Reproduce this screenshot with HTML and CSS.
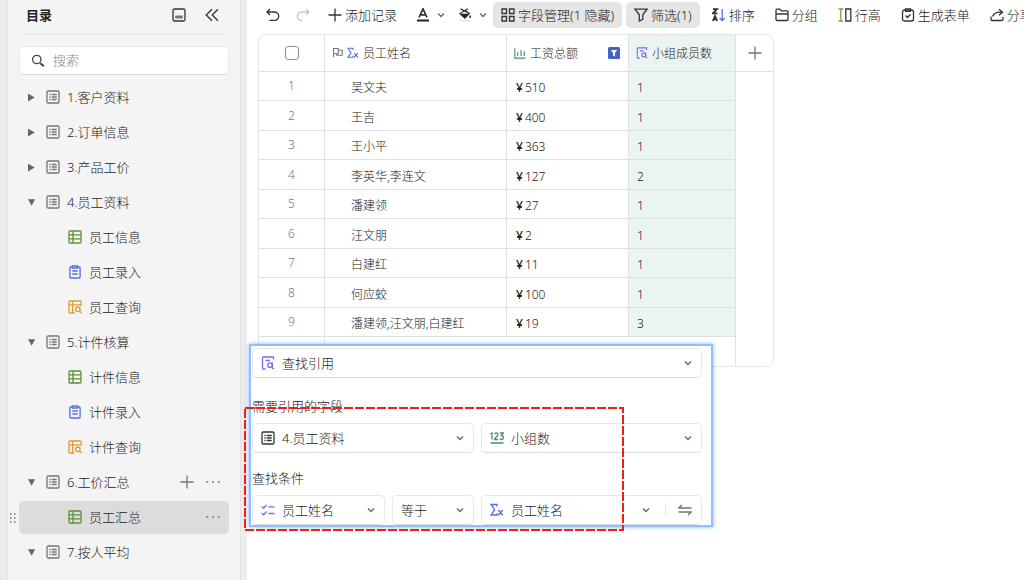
FILE: index.html
```html
<!DOCTYPE html>
<html lang="zh-CN">
<head>
    <meta charset="UTF-8">
    <meta name="viewport" content="width=device-width, initial-scale=1.0">
    <title>员工汇总</title>
    <link rel="stylesheet" href="styles.css">
</head>
<body>
    <!-- 公用图标 -->
    <svg class="sprite" aria-hidden="true">
        <symbol id="i-list" viewBox="0 0 14 14"><rect x="1" y="1" width="12" height="12" rx="1.2"/><path d="M3.4 4.5h1.2M3.4 7h1.2M3.4 9.5h1.2M5.7 4.5h5M5.7 7h5M5.7 9.5h5"/></symbol>
        <symbol id="i-table" viewBox="0 0 14 14"><rect x="1" y="1" width="12" height="12" rx="1"/><path d="M1 4.8h12M1 8.8h12M5 1v12"/></symbol>
        <symbol id="i-form" viewBox="0 0 14 14"><path d="M4 2H2.800c-.6 0-.9.3-.9.9v9.200c0 .6.3.9.9.9h8.400c.6 0 .9-.3.9-.9V2.900c0-.6-.3-.9-.9-.9H10"/><path d="M4.300 1h5.400v2H4.300zM4.300 6h5.400M4.300 9h5.400"/></symbol>
        <symbol id="i-query" viewBox="0 0 14 14"><path d="M6.500 13H1.800a.8.8 0 0 1-.8-.8V1.800c0-.5.4-.8.8-.8h10.400c.5 0 .8.3.8.8V6M1 4.8h12M4.600 1v12"/><circle cx="9.800" cy="9.300" r="2.300"/><path d="M11.500 11l2 2.300"/></symbol>
        <symbol id="i-lookup" viewBox="0 0 14 14"><path d="M4.500 13H2.500c-.6 0-1-.4-1-1V2c0-.6.4-1 1-1H12.500v2.500M4.500 4.500H9"/><circle cx="9" cy="9.200" r="2.300"/><path d="M11.300 6.500v5c0 .8.600 1.300 1.800 1.300"/></symbol>
        <symbol id="i-sigma" viewBox="0 0 14 14"><path d="M7 3.5V1.5H1.2L4.700 6.700 1.200 12H7v-1.800M8.200 7l4.600 5.200M12.800 7l-4.600 5.200"/></symbol>
        <symbol id="i-chevron" viewBox="0 0 8 8"><path d="M1 2.500l3 3 3-3"/></symbol>
        <symbol id="i-plus" viewBox="0 0 14 14"><path d="M7 .5v13M.5 7h13"/></symbol>
        <symbol id="i-dots" viewBox="0 0 14 14"><path d="M.3 7h1.900M6 7h1.900M11.700 7h1.900"/></symbol>
    </svg>

    <div class="app">
        <aside class="sidebar">
            <div class="side-header">
                <h1>目录</h1>
                <button class="icon-btn" aria-label="面板"><svg class="icon dark" viewBox="0 0 14 14"><rect x="1" y="1" width="12" height="12" rx="1.5"/><path class="solid" d="M3.200 7.500h7.600v3H3.200z"/></svg></button>
                <button class="icon-btn" aria-label="收起"><svg class="icon dark" viewBox="0 0 14 14"><path d="M7 1.200L1.200 7 7 12.800M13 1.200L7.200 7l5.800 5.800"/></svg></button>
            </div>
            <label class="search">
                <svg class="icon navy" viewBox="0 0 14 14"><circle cx="5.800" cy="5.500" r="4.200"/><path class="thick" d="M9.400 9.200l3.400 3"/></svg>
                <input type="text" placeholder="搜索" aria-label="搜索">
            </label>
            <nav class="tree">
                <div class="node"><span class="caret"></span><svg class="icon gray"><use href="#i-list"/></svg><a href="#">1.客户资料</a></div>
                <div class="node"><span class="caret"></span><svg class="icon gray"><use href="#i-list"/></svg><a href="#">2.订单信息</a></div>
                <div class="node"><span class="caret"></span><svg class="icon gray"><use href="#i-list"/></svg><a href="#">3.产品工价</a></div>
                <div class="node"><span class="caret open"></span><svg class="icon gray"><use href="#i-list"/></svg><a href="#">4.员工资料</a></div>
                <div class="node child"><svg class="icon green"><use href="#i-table"/></svg><a href="#">员工信息</a></div>
                <div class="node child"><svg class="icon blue"><use href="#i-form"/></svg><a href="#">员工录入</a></div>
                <div class="node child"><svg class="icon orange"><use href="#i-query"/></svg><a href="#">员工查询</a></div>
                <div class="node"><span class="caret open"></span><svg class="icon gray"><use href="#i-list"/></svg><a href="#">5.计件核算</a></div>
                <div class="node child"><svg class="icon green"><use href="#i-table"/></svg><a href="#">计件信息</a></div>
                <div class="node child"><svg class="icon blue"><use href="#i-form"/></svg><a href="#">计件录入</a></div>
                <div class="node child"><svg class="icon orange"><use href="#i-query"/></svg><a href="#">计件查询</a></div>
                <div class="node"><span class="caret open"></span><svg class="icon gray"><use href="#i-list"/></svg><a href="#">6.工价汇总</a>
                    <button class="icon-btn" aria-label="添加"><svg class="icon gray"><use href="#i-plus"/></svg></button>
                    <button class="icon-btn" aria-label="更多"><svg class="icon gray"><use href="#i-dots"/></svg></button>
                </div>
                <div class="node child active">
                    <svg class="grip" viewBox="0 0 6 10"><path d="M0 1h1.500M4 1h1.500M0 5h1.500M4 5h1.500M0 9h1.500M4 9h1.500"/></svg>
                    <svg class="icon green"><use href="#i-table"/></svg><a href="#">员工汇总</a>
                    <button class="icon-btn" aria-label="更多"><svg class="icon gray"><use href="#i-dots"/></svg></button>
                </div>
                <div class="node"><span class="caret open"></span><svg class="icon gray"><use href="#i-list"/></svg><a href="#">7.按人平均</a></div>
            </nav>
        </aside>

        <main>
            <div class="toolbar">
                <button class="tool small" aria-label="撤销"><svg class="icon dark" viewBox="0 0 14 14"><path d="M4 1L1 4l3 3M1 4h7.500a4.200 4.200 0 0 1 0 8.400H3.500"/></svg></button>
                <button class="tool small" aria-label="重做"><svg class="icon light" viewBox="0 0 14 14"><path d="M10 1l3 3-3 3M13 4H5.500a4.200 4.200 0 0 0 0 8.400H6"/></svg></button>
                <button class="tool"><svg class="icon dark"><use href="#i-plus"/></svg>添加记录</button>
                <button class="tool drop" aria-label="文字颜色"><svg class="icon dark" viewBox="0 0 14 14"><path class="bold" d="M3 9.500L7 .8l4 8.700M4.500 6.800h5"/><path class="fill-black" d="M1 11.500h12v2H1z"/></svg><svg class="chev"><use href="#i-chevron"/></svg></button>
                <button class="tool drop" aria-label="填充颜色"><svg class="icon dark" viewBox="0 0 14 14"><path d="M2.500 .8l8 4.200M10 .8L2 5.500 6.800 10l4.500-4.500L6.500 2"/><path class="fill-black" d="M2.500 5.800h8.500L6.800 10zM12.200 7c1.300 1.800 1.300 3 0 3s-1.300-1.200 0-3z"/><path class="fill-pale" d="M1 11.800h12v1.700H1z"/></svg><svg class="chev"><use href="#i-chevron"/></svg></button>
                <button class="tool on"><svg class="icon dark" viewBox="0 0 14 14"><path d="M1 1h4.500v4.500H1zM8.500 1H13v4.500H8.500zM1 8.500h4.500V13H1zM8.500 8.500H13V13H8.500z"/></svg>字段管理(1 隐藏)</button>
                <button class="tool on"><svg class="icon dark" viewBox="0 0 14 14"><path d="M1 1.200h12L8.800 6.800v4.500L5.300 13V6.800z"/></svg>筛选(1)</button>
                <button class="tool"><svg class="icon dark" viewBox="0 0 14 14"><path class="bold" d="M1 1.200h4L1 5.300h4.500M.8 13L3 7.800 5.300 13M1.500 11.300h3.200"/><path class="s-blue" d="M10.200 1v11.500M7.500 10l2.700 2.600L12.700 10"/></svg>排序</button>
                <button class="tool"><svg class="icon dark" viewBox="0 0 14 14"><path d="M1 11.500V2.200C1 1.500 1.400 1.200 2 1.200h3l1.500 1.600H12c.6 0 1 .3 1 1v7.700c0 .6-.4 1-1 1H2c-.6 0-1-.4-1-1zM1 6h12"/></svg>分组</button>
                <button class="tool"><svg class="icon dark" viewBox="0 0 14 14"><path class="s-green" d="M.5 1h4.500M.5 13h4.500M2.800 1v12"/><path d="M7.800 1h5v12h-5z"/></svg>行高</button>
                <button class="tool"><svg class="icon dark" viewBox="0 0 14 14"><rect x="1.500" y="2" width="11" height="11" rx="2"/><path d="M4.500 .8h5v2.500h-5zM4.500 7.500l2 2 3-3.200"/></svg>生成表单</button>
                <button class="tool"><svg class="icon dark" viewBox="0 0 14 14"><path d="M9 1.200L12.500 4.200 9 7.200M12.500 4.200H9.500C6 4.200 4 5.500 2.500 8.500M1 8.500v2.800c0 .8.500 1.200 1.200 1.200h9.600c.7 0 1.200-.4 1.200-1.200V9"/></svg>分享</button>
            </div>

            <div class="grid-wrap">
                <table class="grid">
                    <colgroup><col class="c-num"><col class="c-name"><col class="c-sum"><col class="c-count"><col class="c-add"></colgroup>
                    <thead>
                        <tr>
                            <th><input type="checkbox" aria-label="全选"></th>
                            <th><div class="head"><svg class="icon xs gray" viewBox="0 0 14 14"><path d="M2 13V2h6v6.500H2M8 4h5v6.500H6V8.500"/></svg><svg class="icon sm blue"><use href="#i-sigma"/></svg>员工姓名</div></th>
                            <th><div class="head"><svg class="icon sm sea" viewBox="0 0 14 14"><path d="M1 1.500V13h12.500M4.300 6v4.500M8.200 3.500v7M12 5v5.500"/></svg>工资总额<svg class="filter-mark" viewBox="0 0 12 12"><rect width="12" height="12" rx="1.5"/><path d="M2.800 3h6.400L7 6v3.500L5 8.500V6z"/></svg></div></th>
                            <th class="tint"><div class="head"><svg class="icon sm violet"><use href="#i-lookup"/></svg>小组成员数</div></th>
                            <th><button class="icon-btn" aria-label="添加字段"><svg class="icon gray"><use href="#i-plus"/></svg></button></th>
                        </tr>
                    </thead>
                    <tbody>
                        <tr><td>1</td><td>吴文夫</td><td><b>¥</b>510</td><td class="tint">1</td><td></td></tr>
                        <tr><td>2</td><td>王吉</td><td><b>¥</b>400</td><td class="tint">1</td><td></td></tr>
                        <tr><td>3</td><td>王小平</td><td><b>¥</b>363</td><td class="tint">1</td><td></td></tr>
                        <tr><td>4</td><td>李英华,李连文</td><td><b>¥</b>127</td><td class="tint">2</td><td></td></tr>
                        <tr><td>5</td><td>潘建领</td><td><b>¥</b>27</td><td class="tint">1</td><td></td></tr>
                        <tr><td>6</td><td>汪文朋</td><td><b>¥</b>2</td><td class="tint">1</td><td></td></tr>
                        <tr><td>7</td><td>白建红</td><td><b>¥</b>11</td><td class="tint">1</td><td></td></tr>
                        <tr><td>8</td><td>何应蛟</td><td><b>¥</b>100</td><td class="tint">1</td><td></td></tr>
                        <tr><td>9</td><td>潘建领,汪文朋,白建红</td><td><b>¥</b>19</td><td class="tint">3</td><td></td></tr>
                        <tr class="blank"><td></td><td colspan="3"></td><td></td></tr>
                    </tbody>
                </table>
            </div>

            <section class="lookup">
                <div class="field">
                    <svg class="icon violet"><use href="#i-lookup"/></svg>
                    <select aria-label="字段类型"><option>查找引用</option></select>
                    <svg class="chev"><use href="#i-chevron"/></svg>
                </div>
                <h2>需要引用的字段</h2>
                <div class="row">
                    <div class="field">
                        <svg class="icon dark"><use href="#i-list"/></svg>
                        <select aria-label="数据表"><option>4.员工资料</option></select>
                        <svg class="chev"><use href="#i-chevron"/></svg>
                    </div>
                    <div class="field">
                        <svg class="icon sea" viewBox="0 0 14 14"><path d="M.5 3l1.500-1v6.500M4.500 3.200C4.800 1.500 8 1.500 8 3.500c0 1.500-3.500 3.500-3.500 5H8M10 2h3.200l-1.800 2.500c2.600 0 2.600 4 0 4-.8 0-1.200-.3-1.500-.9M.5 12h13"/></svg>
                        <select aria-label="引用字段"><option>小组数</option></select>
                        <svg class="chev"><use href="#i-chevron"/></svg>
                    </div>
                </div>
                <h2>查找条件</h2>
                <div class="row">
                    <div class="pair">
                        <div class="field">
                            <svg class="icon violet" viewBox="0 0 14 14"><path d="M.8 3.500l1.800 1.700L5.500 2M.8 10l1.800 1.700L5.500 8.500M7.500 3.800h6M7.500 10.500h6"/></svg>
                            <select aria-label="条件字段"><option>员工姓名</option></select>
                            <svg class="chev"><use href="#i-chevron"/></svg>
                        </div>
                        <div class="field">
                            <select aria-label="条件"><option>等于</option></select>
                            <svg class="chev"><use href="#i-chevron"/></svg>
                        </div>
                    </div>
                    <div class="field">
                        <svg class="icon blue"><use href="#i-sigma"/></svg>
                        <select aria-label="当前表字段"><option>员工姓名</option></select>
                        <svg class="chev"><use href="#i-chevron"/></svg>
                        <button class="swap" aria-label="切换"><svg class="icon gray" viewBox="0 0 14 14"><path d="M13.500 5H.8L4 2M.5 9h12.700L10 12"/></svg></button>
                    </div>
                </div>
            </section>

            <svg class="mark" aria-hidden="true"><rect x="1" y="1" width="378" height="122"/></svg>
        </main>
    </div>
</body>
</html>
```

FILE: styles.css
```css
* {
    box-sizing: border-box;
}
body {
    margin: 0;
    font-family: "Noto Sans", "Noto Sans CJK SC", sans-serif;
    font-size: 13px;
    font-weight: 300;
    color: #222;
    background: #ececec;
}
button, input, select {
    font: inherit;
    color: inherit;
}
button {
    border: none;
    background: none;
    padding: 0;
    cursor: pointer;
}
a {
    color: inherit;
    text-decoration: none;
}
.sprite {
    display: none;
}
.app {
    display: flex;
    height: 100vh;
    overflow: hidden;
    padding-left: 7px;
}

/* icons */
.icon {
    width: 14px;
    height: 14px;
    flex: none;
    display: block;
    fill: none;
    stroke: currentColor;
    stroke-width: 1.3;
}
.icon.sm {
    width: 12px;
    height: 12px;
}
.icon.xs {
    width: 11px;
    height: 11px;
}
.icon .thick {
    stroke-width: 2.2;
}
.icon .bold {
    stroke-width: 1.7;
}
.icon .solid {
    fill: #777;
    stroke: none;
}
.icon .fill-black {
    fill: #222;
    stroke: none;
}
.icon .fill-pale {
    fill: #e8e8e8;
    stroke: none;
}
.s-blue { stroke: #4a72e0; }
.s-green { stroke: #6aa84f; }
.dark { color: #333; }
.gray { color: #747474; }
.light { color: #c8c8c8; }
.navy { color: #3c4660; }
.green { color: #5c9138; }
.blue { color: #4f6fe0; }
.orange { color: #dd9d33; }
.violet { color: #7a68ee; }
.sea { color: #439466; }
.chev {
    width: 8px;
    height: 8px;
    flex: none;
    fill: none;
    stroke: #666;
    stroke-width: 1.3;
    pointer-events: none;
}

/* sidebar */
.sidebar {
    flex: none;
    width: 234px;
    padding: 0 11px;
    background: #f4f4f4;
    border-left: 1px solid #e2e2e2;
    border-right: 1px solid #e2e2e2;
}
.side-header {
    display: flex;
    align-items: center;
    gap: 19px;
    height: 35px;
    margin: 0 7px 11px;
    padding: 0 3px 4px 0;
    border-bottom: 2px solid #ebebeb;
}
.side-header h1 {
    flex: 1;
    margin: 0;
    font-size: 13px;
    font-weight: 700;
}
.search {
    display: flex;
    align-items: center;
    gap: 8px;
    height: 29px;
    padding: 0 11px;
    background: #fff;
    border: 1px solid #e8e8e8;
    border-bottom-color: #d8d8d8;
    border-radius: 5px;
}
.search input {
    flex: 1;
    min-width: 0;
    padding: 0 0 2px;
    border: none;
    outline: none;
    background: none;
}
.search input::placeholder {
    color: #888;
}
.tree {
    display: flex;
    flex-direction: column;
    gap: 2px;
    margin-top: 6px;
}
.node {
    display: flex;
    align-items: center;
    gap: 7px;
    height: 33px;
    padding: 0 9px;
    border-radius: 5px;
}
.node.child {
    padding-left: 49px;
}
.node.active {
    position: relative;
    background: #dcdcdc;
}
.node a {
    flex: 1;
    padding-bottom: 2px;
}
.node .icon {
    margin-bottom: 1px;
}
.node .icon-btn + .icon-btn {
    margin-left: 5px;
}
.caret {
    width: 11px;
    height: 8px;
    background: #666;
    clip-path: polygon(0 0, 60% 50%, 0 100%);
}
.caret.open {
    clip-path: polygon(0 10%, 65% 10%, 33% 90%);
}
.grip {
    position: absolute;
    left: -9px;
    width: 6px;
    height: 10px;
    stroke: #777;
    stroke-width: 1.5;
}

/* main area */
main {
    flex: 1;
    min-width: 0;
    margin-left: 6px;
    position: relative;
    background: #fff;
}
.toolbar {
    display: flex;
    gap: 4px;
    padding: 2px 0 6px 13px;
    overflow: hidden;
}
.tool {
    display: flex;
    flex: none;
    align-items: center;
    gap: 3px;
    height: 26px;
    padding: 0 8px 1px;
    border-radius: 5px;
    white-space: nowrap;
}
.tool.small {
    padding: 0 6px;
}
.tool.drop {
    gap: 7px;
    padding: 0 2px 0 7px;
}
.tool.on {
    background: #e5e5e5;
}
.grid-wrap {
    width: 516px;
    margin-left: 11px;
    border: 1px solid #e4e5e7;
    border-radius: 8px;
    overflow: hidden;
}
.grid {
    width: 100%;
    table-layout: fixed;
    border-collapse: separate;
    border-spacing: 0;
    font-size: 12px;
}
.c-num { width: 66px; }
.c-name { width: 182px; }
.c-sum { width: 122px; }
.c-count { width: 107px; }
.grid th, .grid td {
    padding: 0;
    font-weight: 300;
    text-align: left;
    border-right: 1px solid #dfe0e3;
    border-bottom: 1px solid #dfe0e3;
}
.grid th {
    height: 37px;
}
.grid td {
    height: 29px;
    padding-top: 4px;
    line-height: 16px;
}
.grid tr:nth-child(even) td {
    height: 30px;
}
.grid tr > :first-child {
    padding-top: 0;
    text-align: center;
    color: #777;
}
.grid tr > :last-child {
    border-right: none;
}
.grid td:last-child, .grid .blank td {
    border-bottom: none;
}
.grid .blank:nth-child(even) td {
    height: 29px;
}
.grid td:nth-child(2) {
    padding-left: 26px;
}
.grid td:nth-child(3) {
    padding-left: 9px;
}
.grid td:nth-child(4) {
    padding-left: 8px;
}
.grid b {
    margin-right: 2px;
    font-weight: 500;
}
.grid .tint {
    background: #eaf4f1;
}
.grid input {
    display: block;
    appearance: none;
    width: 14px;
    height: 14px;
    margin: 0 auto;
    border: 1px solid #8f8f98;
    border-radius: 3px;
}
.head {
    display: flex;
    align-items: center;
    gap: 4px;
    padding: 0 8px 1px 7px;
}
.filter-mark {
    width: 12px;
    height: 12px;
    margin-left: auto;
    fill: #3f62c4;
}
.filter-mark path {
    fill: #fff;
}
th .icon-btn {
    display: block;
    margin: 0 auto;
}

/* lookup settings over the table */
.lookup {
    position: absolute;
    left: 2px;
    top: 344px;
    width: 464px;
    padding: 2px 9px 0 1px;
    background: #fff;
    border: 2px solid #90bffd;
    box-shadow: 0 0 4px #7db0ff;
}
.lookup h2 {
    margin: 19px 0 7px;
    font-size: 13px;
    font-weight: 300;
    line-height: 19px;
}
.lookup .row + h2 {
    margin-top: 16px;
}
.row {
    display: grid;
    grid-template-columns: 222px 1fr;
    gap: 7px;
}
.pair {
    display: grid;
    grid-template-columns: 133px 1fr;
    gap: 7px;
}
.field {
    display: flex;
    align-items: center;
    gap: 7px;
    height: 30px;
    padding: 0 9px 0 8px;
    background: #fff;
    border: 1px solid #e8e8e8;
    border-bottom-color: #dcdcdc;
    border-radius: 5px;
}
.field select {
    flex: 1;
    min-width: 0;
    height: 26px;
    padding: 0 0 1px;
    appearance: none;
    border: none;
    outline: none;
    background: none;
}
.swap {
    margin-left: 8px;
    padding-left: 12px;
    border-left: 1px solid #e4e4e4;
}
.mark {
    position: absolute;
    left: -3px;
    top: 407px;
    width: 380px;
    height: 124px;
    fill: none;
    stroke: #f51d12;
    stroke-width: 2;
    stroke-dasharray: 9 2;
}
```
